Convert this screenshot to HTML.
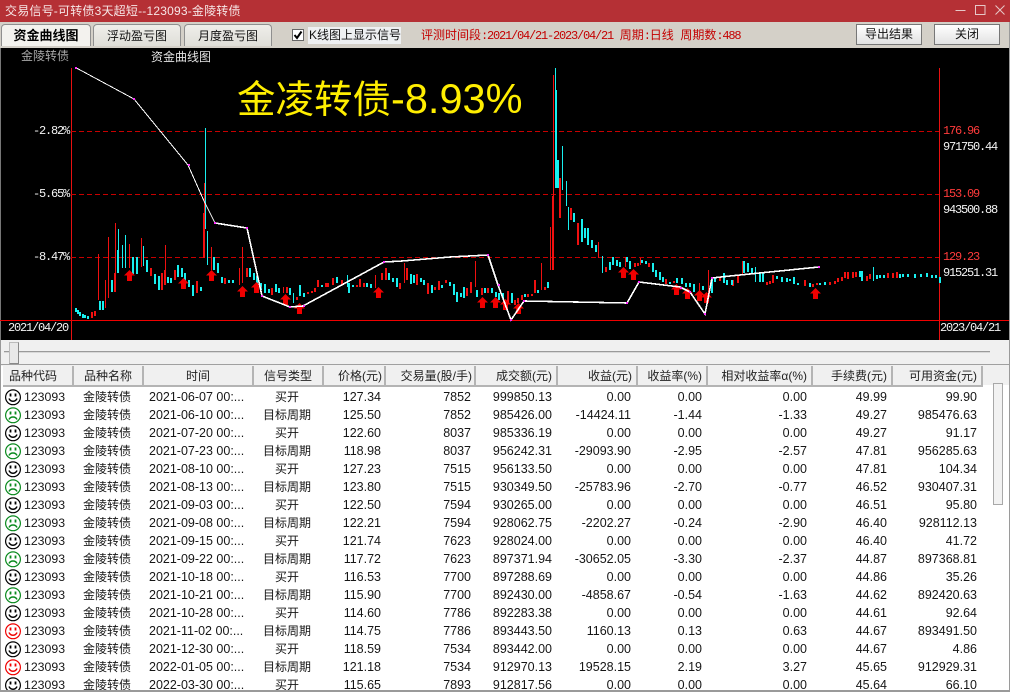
<!DOCTYPE html>
<html><head><meta charset="utf-8"><title>交易信号</title>
<style>
html,body{margin:0;padding:0;background:#f0f0f0;}
#w{position:relative;width:1010px;height:692px;overflow:hidden;background:#fff;font:12px "Liberation Sans","Noto Sans CJK SC",sans-serif;color:#111;}
#w div{position:absolute;white-space:nowrap;}
.tab{top:24px;height:22px;line-height:22px;text-align:center;background:linear-gradient(#efeeea,#dfded8);border:1px solid #8f8f8f;border-bottom:0;border-radius:4px 4px 0 0;box-sizing:border-box;font-size:12px;}
.btn{top:24px;height:21px;line-height:18px;text-align:center;background:linear-gradient(#fff,#e2e2e2);border:1px solid #6a6a6a;box-sizing:border-box;font-size:12px;outline:1px solid #777;outline-offset:-1px;}
.m{font-family:"Liberation Mono","Noto Sans CJK SC",monospace;font-size:12px;letter-spacing:-1.2px;line-height:14px;height:14px;}
.d{font-family:"Liberation Mono",monospace;font-size:12px;letter-spacing:-1.2px;}
.r{color:#ff3b3b}.wh{color:#f4f4f4}
table{position:absolute;border-collapse:collapse;table-layout:fixed;font-size:12.5px;}
td{padding:0;height:18px;line-height:18px;white-space:nowrap;overflow:hidden;text-align:right;color:#161616;}
td.c{text-align:center;font-size:12px;} td.l{text-align:left;}
td.id{text-align:left;padding-left:21px;font-size:12.3px;}
td.e{padding-right:5px;}
.h{top:366px;height:19px;line-height:21px;background:#f0f0f0;border-right:2px solid #b4b4b4;border-bottom:2px solid #b4b4b4;box-sizing:content-box;color:#222;font-size:12px;}
</style></head><body><div id="w">

<div style="left:0;top:0;width:1010px;height:22px;background:#b53035;"></div>
<div style="left:5px;top:3px;color:#f6e6e6;font-size:12px;line-height:16px;letter-spacing:.2px;">交易信号-可转债3天超短--123093-金陵转债</div>
<svg style="position:absolute;left:950px;top:0" width="60" height="22"><path d="M5.5 10.5H15.5M25.5 5.5H35V14.5H25.5ZM45.5 5.5L54.5 14.5M54.5 5.5L45.5 14.5" stroke="#e6c8c8" fill="none" stroke-width="1"/></svg>

<div style="left:0;top:22px;width:1010px;height:26px;background:#d4d0c8;"></div>
<div class="tab" style="left:1px;width:90px;background:#f3f2ee;font-weight:bold;color:#000;font-size:13px;">资金曲线图</div>
<div class="tab" style="left:93px;width:88px;">浮动盈亏图</div>
<div class="tab" style="left:184px;width:88px;">月度盈亏图</div>
<div style="left:308px;top:27px;width:93px;height:17px;background:#eef0f2;"></div>
<div style="left:292px;top:29px;width:10px;height:10px;background:#fff;border:1px solid #666;"><svg width="10" height="10" style="display:block"><path d="M1.5 5L4 8L8.5 1.5" stroke="#000" stroke-width="2" fill="none"/></svg></div>
<div style="left:309px;top:27px;line-height:16px;font-size:12px;color:#111;">K线图上显示信号</div>
<div style="left:421px;top:28px;line-height:15px;color:#c40000;font-size:12px;">评测时间段<span class="d">:2021/04/21-2023/04/21</span>&nbsp;&nbsp;周期<span class="d">:</span>日线&nbsp;&nbsp;周期数<span class="d">:488</span></div>
<div class="btn" style="left:856px;width:66px;">导出结果</div>
<div class="btn" style="left:934px;width:66px;">关闭</div>

<div style="left:0;top:48px;width:1010px;height:292px;background:#000;"></div>
<div style="left:0;top:48px;width:1px;height:292px;background:#777;"></div>
<svg style="position:absolute;left:0;top:0" width="1010" height="340" shape-rendering="crispEdges" fill="none">
<path d="M71.5 68V340M939.5 68V340" stroke="#e81010"/>
<path d="M71 131.5H939M71 194.5H939M71 257.5H939" stroke="#c80000" stroke-dasharray="5 3"/>
<path d="M0 320.5H1010" stroke="#f00000"/>
<!-- thin red -->
<path stroke="#f01010" d="M98.5 254V300M105.5 280V308M108.5 237V298M115.5 223V292M129.5 244V268M141.5 238V267M165.5 245V285M204.5 183V258M211.5 247V270M239.5 268V285M242.5 247V283M283.5 287V293M375.5 275V288M404.5 263V283M475.5 261V287M541.5 263V290M550.5 227V270M553.5 75V196M578.5 223V245M598.5 242V258M625.5 257V267M640.5 258V265M699.5 283V300M708.5 270V297M742.5 261V275"/>
<!-- thin cyan -->
<path stroke="#18f0f0" d="M205.5 128V229M118.5 229V273M122.5 245V268M125.5 235V268M143.5 246V266M207.5 231V265M555.5 68V187M562.5 146V190M566.5 181V206M568.5 207V230M347.5 275V287M873.5 267V281M602.5 256V273M755.5 267V282M293.5 293V303"/>
<!-- thick red -->
<path stroke="#f01010" stroke-width="2" d="M92 312V318M95 311V316M115 273V292M112 280V280M151 268V276M162 273V290M165 270V285M175 270V280M197 281V293M204 213V258M225 278V284M247 268V277M272 288V295M287 287V293M297 297V300M308 292V294M312 291V293M315 288V292M318 280V287M326 283V287M328 283V287M333 278V285M342 280V285M357 285V287M360 279V287M364 283V287M382 273V280M386 268V280M400 283V289M407 268V280M417 274V285M428 283V294M435 287V290M439 281V290M446 280V283M467 288V296M471 282V293M482 288V295M488 288V293M508 291V303M515 300V305M518 298V303M522 295V300M528 294V297M532 294V296M535 280V293M545 287V290M553 196V270M560 178V218M571 208V220M578 223V245M606 267V272M635 263V267M638 263V266M649 263V267M666 279V284M674 281V283M720 278V281M733 280V286M738 275V283M767 282V285M770 281V284M773 275V283M805 280V286M813 284V287M817 283V285M830 282V285M835 281V284M838 278V282M842 277V281M845 272V278M848 272V279M853 272V278M856 272V277M867 276V281M870 274V279M888 273V278M893 273V278M897 272V278"/>
<!-- thick cyan -->
<path stroke="#18f0f0" stroke-width="2" d="M76 308V312M78 310V314M80 312V316M83 314V318M85 315V318M88 316V319M100 301V310M103 301V310M112 280V292M118 250V273M133 257V274M137 257V274M147 260V272M155 274V284M159 276V290M168 277V283M171 278V283M178 265V277M182 268V277M185 273V282M189 280V287M193 285V296M201 287V291M214 257V270M218 263V273M222 277V283M229 280V283M233 280V283M250 268V277M254 273V280M257 276V285M261 283V290M265 284V293M269 289V293M276 284V292M279 288V293M290 288V295M300 285V296M304 293V297M322 285V287M337 277V283M349 283V293M353 285V287M367 283V287M371 284V288M389 273V280M393 278V282M397 278V287M411 274V284M414 275V283M421 278V282M424 280V285M432 285V293M442 285V288M450 282V286M454 284V295M457 292V302M461 293V297M464 287V298M477 290V297M485 288V293M492 288V293M496 292V297M499 293V300M503 293V298M512 293V303M525 294V297M538 290V293M548 282V288M556 90V188M558 160V188M574 213V222M582 219V242M585 228V238M588 228V245M592 240V248M596 245V252M610 262V270M613 257V265M617 260V266M620 262V267M627 257V262M630 261V269M642 260V263M646 261V264M653 263V272M656 270V277M660 272V280M663 277V282M670 282V284M677 278V283M682 278V284M686 283V287M690 283V287M694 284V292M703 286V290M712 278V293M715 278V282M724 273V283M727 280V285M732 280V285M744 261V273M748 263V272M752 268V273M760 272V282M763 273V282M777 276V279M782 277V282M787 278V282M790 279V281M794 277V284M798 283V285M810 283V287M820 283V285M825 282V285M860 271V277M862 271V281M877 275V279M880 275V278M884 275V278M900 274V278M903 274V277M908 274V277M915 274V278M921 274V277M927 273V277M932 275V278M936 275V278M940 277V283"/>
<!-- arrows -->
<path fill="#f00000" stroke="none" shape-rendering="auto" d="M129.5 270l5.5 5.5h-3v5.5h-5v-5.5h-3zM183.5 278l5.5 5.5h-3v5.5h-5v-5.5h-3zM211.5 270l5.5 5.5h-3v5.5h-5v-5.5h-3zM242.5 286l5.5 5.5h-3v5.5h-5v-5.5h-3zM256.5 282l5.5 5.5h-3v5.5h-5v-5.5h-3zM285.5 294l5.5 5.5h-3v5.5h-5v-5.5h-3zM299.5 303l5.5 5.5h-3v5.5h-5v-5.5h-3zM378.5 287l5.5 5.5h-3v5.5h-5v-5.5h-3zM482.5 297l5.5 5.5h-3v5.5h-5v-5.5h-3zM495.5 297l5.5 5.5h-3v5.5h-5v-5.5h-3zM505.5 299l5.5 5.5h-3v5.5h-5v-5.5h-3zM518.5 303l5.5 5.5h-3v5.5h-5v-5.5h-3zM623.5 267l5.5 5.5h-3v5.5h-5v-5.5h-3zM633.5 269l5.5 5.5h-3v5.5h-5v-5.5h-3zM676.5 284l5.5 5.5h-3v5.5h-5v-5.5h-3zM687.5 288l5.5 5.5h-3v5.5h-5v-5.5h-3zM699.5 290l5.5 5.5h-3v5.5h-5v-5.5h-3zM706.5 292l5.5 5.5h-3v5.5h-5v-5.5h-3zM815.5 288l5.5 5.5h-3v5.5h-5v-5.5h-3z"/>
<!-- equity line -->
<polyline stroke="#fff" stroke-width="1" points="75.5,67.5 134,99 188,165 204,201 215,223"/>
<polyline stroke="#fff" stroke-width="1.6" points="215,223 247,228 262,296 290,307 303,306 384,262 402,261 450,257 488,255 498,285 511,320 524,301 627,303 639,282 680,287 690,292 705,314 712,278 730,276 819,267"/>
<path fill="#ff30ff" stroke="none" d="M75 67h2v2h-2zM133 98h2v2h-2zM188 164h2v2h-2zM214 222h2v2h-2zM246 227h2v2h-2zM261 295h2v2h-2zM289 306h2v2h-2zM303 305h2v2h-2zM383 261h2v2h-2zM487 254h2v2h-2zM498 284h2v2h-2zM510 319h2v2h-2zM523 300h2v2h-2zM626 302h2v2h-2zM638 281h2v2h-2zM680 287h2v2h-2zM689 291h2v2h-2zM704 313h2v2h-2zM711 277h2v2h-2zM818 266h2v2h-2z"/>
</svg>

<div style="left:21px;top:49px;color:#a8a8a8;font-size:12px;line-height:14px;">金陵转债</div>
<div style="left:151px;top:50px;color:#e4e4e4;font-size:12px;line-height:14px;">资金曲线图</div>
<div style="left:237px;top:72px;height:54px;line-height:54px;color:#ffee00;font-size:38.5px;">金凌转债<span style="font-size:41.5px;">-8.93%</span></div>

<div class="m wh" style="left:33px;top:124px;">-2.82%</div>
<div class="m wh" style="left:33px;top:187px;">-5.65%</div>
<div class="m wh" style="left:33px;top:250px;">-8.47%</div>
<div class="m wh" style="left:8px;top:321px;">2021/04/20</div>
<div class="m r" style="left:943px;top:124px;">176.96</div>
<div class="m wh" style="left:943px;top:140px;">971750.44</div>
<div class="m r" style="left:943px;top:187px;">153.09</div>
<div class="m wh" style="left:943px;top:203px;">943500.88</div>
<div class="m r" style="left:943px;top:250px;">129.23</div>
<div class="m wh" style="left:943px;top:266px;">915251.31</div>
<div class="m wh" style="left:940px;top:321px;">2023/04/21</div>

<div style="left:0;top:340px;width:1010px;height:26px;background:#f0f0f0;"></div>
<div style="left:4px;top:351px;width:986px;height:1px;background:#9a9a9a;"></div>
<div style="left:4px;top:352px;width:986px;height:1px;background:#d8d8d8;"></div>
<div style="left:9px;top:342px;width:10px;height:22px;background:#e8e8e8;border:1px solid #bbb;border-right-color:#888;border-bottom-color:#888;box-sizing:border-box;"></div>

<div style="left:1px;top:364px;width:1008px;height:1px;background:#a0a0a0;"></div>
<div style="left:982px;top:366px;width:27px;height:19px;background:#f0f0f0;"></div>
<div class="h" style="left:3px;width:69px;"><span style="margin-left:6px">品种代码</span></div>
<div class="h" style="left:74px;width:68px;"><span style="margin-left:10px">品种名称</span></div>
<div class="h" style="left:144px;width:108px;text-align:center;">时间</div>
<div class="h" style="left:254px;width:68px;text-align:center;padding-right:0;">信号类型</div>
<div class="h" style="left:324px;width:60px;text-align:right;"><span style="margin-right:2px">价格(元)</span></div>
<div class="h" style="left:386px;width:88px;text-align:right;"><span style="margin-right:2px">交易量(股/手)</span></div>
<div class="h" style="left:476px;width:80px;text-align:right;"><span style="margin-right:4px">成交额(元)</span></div>
<div class="h" style="left:558px;width:78px;text-align:right;"><span style="margin-right:4px">收益(元)</span></div>
<div class="h" style="left:638px;width:68px;text-align:right;"><span style="margin-right:4px">收益率(%)</span></div>
<div class="h" style="left:708px;width:103px;text-align:right;"><span style="margin-right:4px">相对收益率α(%)</span></div>
<div class="h" style="left:813px;width:78px;text-align:right;"><span style="margin-right:4px">手续费(元)</span></div>
<div class="h" style="left:893px;width:88px;text-align:right;"><span style="margin-right:4px">可用资金(元)</span></div>

<table style="left:3px;top:388px;width:979px;">
<colgroup><col style="width:69px"><col style="width:70px"><col style="width:110px"><col style="width:70px"><col style="width:64px"><col style="width:90px"><col style="width:81px"><col style="width:79px"><col style="width:71px"><col style="width:105px"><col style="width:80px"><col style="width:90px"></colgroup>
<tr><td class="id">123093</td><td class="c">金陵转债</td><td class="l" style="padding-left:7px">2021-06-07 00:...</td><td class="c">买开</td><td class="e">127.34</td><td class="e">7852</td><td class="e">999850.13</td><td class="e">0.00</td><td class="e">0.00</td><td class="e">0.00</td><td class="e">49.99</td><td class="e">99.90</td></tr>
<tr><td class="id">123093</td><td class="c">金陵转债</td><td class="l" style="padding-left:7px">2021-06-10 00:...</td><td class="c">目标周期</td><td class="e">125.50</td><td class="e">7852</td><td class="e">985426.00</td><td class="e">-14424.11</td><td class="e">-1.44</td><td class="e">-1.33</td><td class="e">49.27</td><td class="e">985476.63</td></tr>
<tr><td class="id">123093</td><td class="c">金陵转债</td><td class="l" style="padding-left:7px">2021-07-20 00:...</td><td class="c">买开</td><td class="e">122.60</td><td class="e">8037</td><td class="e">985336.19</td><td class="e">0.00</td><td class="e">0.00</td><td class="e">0.00</td><td class="e">49.27</td><td class="e">91.17</td></tr>
<tr><td class="id">123093</td><td class="c">金陵转债</td><td class="l" style="padding-left:7px">2021-07-23 00:...</td><td class="c">目标周期</td><td class="e">118.98</td><td class="e">8037</td><td class="e">956242.31</td><td class="e">-29093.90</td><td class="e">-2.95</td><td class="e">-2.57</td><td class="e">47.81</td><td class="e">956285.63</td></tr>
<tr><td class="id">123093</td><td class="c">金陵转债</td><td class="l" style="padding-left:7px">2021-08-10 00:...</td><td class="c">买开</td><td class="e">127.23</td><td class="e">7515</td><td class="e">956133.50</td><td class="e">0.00</td><td class="e">0.00</td><td class="e">0.00</td><td class="e">47.81</td><td class="e">104.34</td></tr>
<tr><td class="id">123093</td><td class="c">金陵转债</td><td class="l" style="padding-left:7px">2021-08-13 00:...</td><td class="c">目标周期</td><td class="e">123.80</td><td class="e">7515</td><td class="e">930349.50</td><td class="e">-25783.96</td><td class="e">-2.70</td><td class="e">-0.77</td><td class="e">46.52</td><td class="e">930407.31</td></tr>
<tr><td class="id">123093</td><td class="c">金陵转债</td><td class="l" style="padding-left:7px">2021-09-03 00:...</td><td class="c">买开</td><td class="e">122.50</td><td class="e">7594</td><td class="e">930265.00</td><td class="e">0.00</td><td class="e">0.00</td><td class="e">0.00</td><td class="e">46.51</td><td class="e">95.80</td></tr>
<tr><td class="id">123093</td><td class="c">金陵转债</td><td class="l" style="padding-left:7px">2021-09-08 00:...</td><td class="c">目标周期</td><td class="e">122.21</td><td class="e">7594</td><td class="e">928062.75</td><td class="e">-2202.27</td><td class="e">-0.24</td><td class="e">-2.90</td><td class="e">46.40</td><td class="e">928112.13</td></tr>
<tr><td class="id">123093</td><td class="c">金陵转债</td><td class="l" style="padding-left:7px">2021-09-15 00:...</td><td class="c">买开</td><td class="e">121.74</td><td class="e">7623</td><td class="e">928024.00</td><td class="e">0.00</td><td class="e">0.00</td><td class="e">0.00</td><td class="e">46.40</td><td class="e">41.72</td></tr>
<tr><td class="id">123093</td><td class="c">金陵转债</td><td class="l" style="padding-left:7px">2021-09-22 00:...</td><td class="c">目标周期</td><td class="e">117.72</td><td class="e">7623</td><td class="e">897371.94</td><td class="e">-30652.05</td><td class="e">-3.30</td><td class="e">-2.37</td><td class="e">44.87</td><td class="e">897368.81</td></tr>
<tr><td class="id">123093</td><td class="c">金陵转债</td><td class="l" style="padding-left:7px">2021-10-18 00:...</td><td class="c">买开</td><td class="e">116.53</td><td class="e">7700</td><td class="e">897288.69</td><td class="e">0.00</td><td class="e">0.00</td><td class="e">0.00</td><td class="e">44.86</td><td class="e">35.26</td></tr>
<tr><td class="id">123093</td><td class="c">金陵转债</td><td class="l" style="padding-left:7px">2021-10-21 00:...</td><td class="c">目标周期</td><td class="e">115.90</td><td class="e">7700</td><td class="e">892430.00</td><td class="e">-4858.67</td><td class="e">-0.54</td><td class="e">-1.63</td><td class="e">44.62</td><td class="e">892420.63</td></tr>
<tr><td class="id">123093</td><td class="c">金陵转债</td><td class="l" style="padding-left:7px">2021-10-28 00:...</td><td class="c">买开</td><td class="e">114.60</td><td class="e">7786</td><td class="e">892283.38</td><td class="e">0.00</td><td class="e">0.00</td><td class="e">0.00</td><td class="e">44.61</td><td class="e">92.64</td></tr>
<tr><td class="id">123093</td><td class="c">金陵转债</td><td class="l" style="padding-left:7px">2021-11-02 00:...</td><td class="c">目标周期</td><td class="e">114.75</td><td class="e">7786</td><td class="e">893443.50</td><td class="e">1160.13</td><td class="e">0.13</td><td class="e">0.63</td><td class="e">44.67</td><td class="e">893491.50</td></tr>
<tr><td class="id">123093</td><td class="c">金陵转债</td><td class="l" style="padding-left:7px">2021-12-30 00:...</td><td class="c">买开</td><td class="e">118.59</td><td class="e">7534</td><td class="e">893442.00</td><td class="e">0.00</td><td class="e">0.00</td><td class="e">0.00</td><td class="e">44.67</td><td class="e">4.86</td></tr>
<tr><td class="id">123093</td><td class="c">金陵转债</td><td class="l" style="padding-left:7px">2022-01-05 00:...</td><td class="c">目标周期</td><td class="e">121.18</td><td class="e">7534</td><td class="e">912970.13</td><td class="e">19528.15</td><td class="e">2.19</td><td class="e">3.27</td><td class="e">45.65</td><td class="e">912929.31</td></tr>
<tr><td class="id">123093</td><td class="c">金陵转债</td><td class="l" style="padding-left:7px">2022-03-30 00:...</td><td class="c">买开</td><td class="e">115.65</td><td class="e">7893</td><td class="e">912817.56</td><td class="e">0.00</td><td class="e">0.00</td><td class="e">0.00</td><td class="e">45.64</td><td class="e">66.10</td></tr>
</table>

<svg style="position:absolute;left:0;top:385px" width="24" height="307" fill="none" stroke-width="1.2">
<defs>
<g id="s"><circle cx="13" cy="12.3" r="7.4"/><path d="M10.5 8.5v3M15.5 8.5v3" stroke-width="1.8"/><path d="M9 13.5c1.5 3.6 6.5 3.6 8 0" stroke-width="1.5"/></g>
<g id="f"><circle cx="13" cy="12.3" r="7.4"/><path d="M10.5 8.5v3M15.5 8.5v3" stroke-width="1.8"/><path d="M9 16.5c1.5-3.4 6.5-3.4 8 0" stroke-width="1.5"/></g>
</defs>
<use href="#s" stroke="#000" y="0"/><use href="#f" stroke="#0a8a1e" y="18"/>
<use href="#s" stroke="#000" y="36"/><use href="#f" stroke="#0a8a1e" y="54"/>
<use href="#s" stroke="#000" y="72"/><use href="#f" stroke="#0a8a1e" y="90"/>
<use href="#s" stroke="#000" y="108"/><use href="#f" stroke="#0a8a1e" y="126"/>
<use href="#s" stroke="#000" y="144"/><use href="#f" stroke="#0a8a1e" y="162"/>
<use href="#s" stroke="#000" y="180"/><use href="#f" stroke="#0a8a1e" y="198"/>
<use href="#s" stroke="#000" y="216"/><use href="#s" stroke="#f00000" y="234"/>
<use href="#s" stroke="#000" y="252"/><use href="#s" stroke="#f00000" y="270"/>
<use href="#s" stroke="#000" y="288"/>
</svg>

<div style="left:993px;top:383px;width:10px;height:122px;background:#f2f2f2;border:1px solid #a8a8a8;box-sizing:border-box;"></div>
<div style="left:0;top:340px;width:1px;height:352px;background:#9a9a9a;"></div>
<div style="left:1009px;top:22px;width:1px;height:670px;background:#9a9a9a;"></div>
<div style="left:0;top:690px;width:1010px;height:2px;background:#9a9a9a;"></div>
</div></body></html>
